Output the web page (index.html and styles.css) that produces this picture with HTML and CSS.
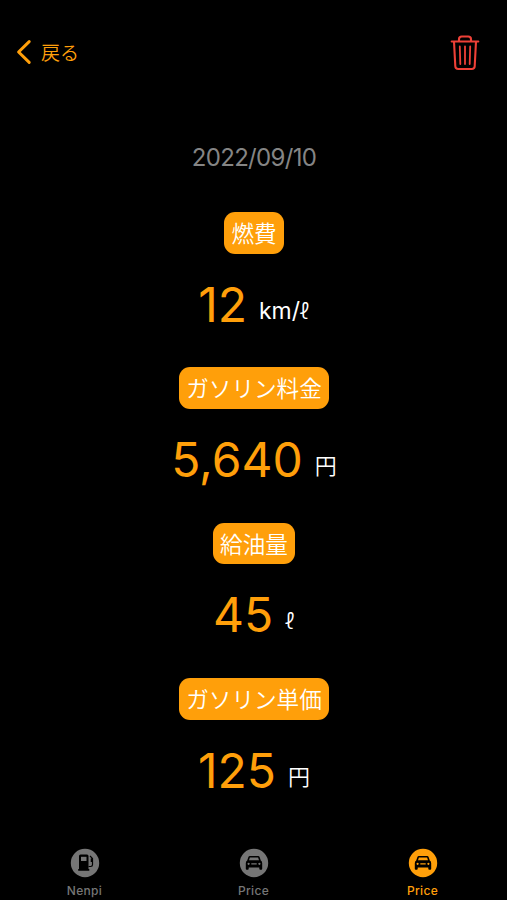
FILE: index.html
```html
<!DOCTYPE html>
<html lang="ja">
<head>
  <meta charset="UTF-8">
  <meta name="viewport" content="width=device-width, initial-scale=1.0">
  <title>燃費</title>
  <link rel="stylesheet" href="styles.css">
</head>
<body>
  <header class="nav">
    <a class="back" href="#">
      <svg width="16" height="26" viewBox="0 0 16 26"><path d="M13.2 2.6 2.6 13l10.6 10.4"/></svg>
      <span>戻る</span>
    </a>
    <button class="delete" aria-label="削除">
      <svg width="30" height="36" viewBox="0 0 30 36">
        <path d="M1.700 6.500h26.600M9 6V4.200Q9 1.500 11.800 1.500h6.400Q21 1.500 21 4.200V6M4 6.500l1.300 24.700q.2 2.800 3 2.800h13.400q2.800 0 3-2.800L26 6.500"/>
        <path class="lines" d="M9.800 11.500l.5 17.500M15 11.500v17.500M20.200 11.500l-.5 17.500"/>
      </svg>
    </button>
  </header>

  <main>
    <p class="date">2022/09/10</p>
    <section class="item">
      <h2>燃費</h2>
      <p class="value"><span class="num">12</span><span class="unit">km/<span class="liter">ℓ</span></span></p>
    </section>
    <section class="item">
      <h2>ガソリン料金</h2>
      <p class="value"><span class="num">5,640</span><span class="unit kanji">円</span></p>
    </section>
    <section class="item">
      <h2>給油量</h2>
      <p class="value"><span class="num">45</span><span class="unit liter">ℓ</span></p>
    </section>
    <section class="item">
      <h2>ガソリン単価</h2>
      <p class="value"><span class="num">125</span><span class="unit kanji">円</span></p>
    </section>
  </main>

  <nav class="tabs">
    <a class="tab" href="#">
      <svg width="30" height="30" viewBox="0 0 30 30">
        <circle cx="15" cy="15" r="14.200"/>
        <path class="cut" d="M9 8q0-1.500 1.500-1.500h6.500q1.500 0 1.500 1.500V21h.8v1.700H8.200V21H9z"/>
        <path class="window" d="M11 8.800h5.500v4.200H11z"/>
        <path class="hose" d="M18.500 18.500h2.200q1.800 0 1.800-1.700V10.500L20 8M21.300 10.500v3.500"/>
      </svg>
      <span>Nenpi</span>
    </a>
    <a class="tab" href="#">
      <svg width="30" height="30" viewBox="0 0 30 30">
        <circle cx="15" cy="15" r="14.200"/>
        <path class="cut" fill-rule="evenodd" d="M9.300 9.200Q9.700 8 10.900 8h8.200q1.200 0 1.600 1.200l1.100 3.400q1.400.8 1.400 2.600v5.600q0 .9-.9.900h-1.100q-.9 0-.9-.9v-1.300H9.700v1.300q0 .9-.9.900H7.700q-.9 0-.9-.9v-5.600q0-1.800 1.400-2.600zM10.900 9.500l-.9 2.800h10l-.9-2.800zM9.600 14.700a1.100 1.100 0 1 0 .01 0zM20.400 14.700a1.100 1.100 0 1 0 .01 0zM12.300 15.200h5.400v1.400h-5.400z"/>
      </svg>
      <span>Price</span>
    </a>
    <a class="tab active" href="#">
      <svg width="30" height="30" viewBox="0 0 30 30">
        <circle cx="15" cy="15" r="14.200"/>
        <path class="cut" fill-rule="evenodd" d="M9.300 9.200Q9.700 8 10.900 8h8.200q1.200 0 1.600 1.200l1.100 3.400q1.400.8 1.400 2.600v5.600q0 .9-.9.900h-1.100q-.9 0-.9-.9v-1.300H9.700v1.300q0 .9-.9.900H7.700q-.9 0-.9-.9v-5.600q0-1.800 1.400-2.600zM10.900 9.500l-.9 2.800h10l-.9-2.800zM9.600 14.700a1.100 1.100 0 1 0 .01 0zM20.400 14.700a1.100 1.100 0 1 0 .01 0zM12.300 15.200h5.400v1.400h-5.400z"/>
      </svg>
      <span>Price</span>
    </a>
  </nav>
</body>
</html>
```
FILE: styles.css
```css
* {
  box-sizing: border-box;
}
body {
  margin: 0;
  height: 900px;
  overflow: hidden;
  display: flex;
  flex-direction: column;
  background: #000;
  color: #fff;
  font-family: Inter, "Noto Sans CJK JP", sans-serif;
}
svg {
  display: block;
}
.nav {
  display: flex;
  justify-content: space-between;
  align-items: center;
  height: 104px;
  padding: 0 27px 0 16px;
}
.back {
  display: flex;
  align-items: center;
  gap: 9px;
  color: #ff9f0a;
  font-size: 19px;
  font-weight: 350;
  text-decoration: none;
}
.back span {
  padding-bottom: 2px;
}
.back path {
  fill: none;
  stroke: #ff9f0a;
  stroke-width: 3;
  stroke-linecap: round;
  stroke-linejoin: round;
}
.delete {
  padding: 1px 0 0;
  border: none;
  background: none;
}
.delete path {
  fill: none;
  stroke: #ee4037;
  stroke-width: 2.1;
  stroke-linecap: round;
  stroke-linejoin: round;
}
.delete .lines {
  stroke-width: 1.8;
}
main {
  flex: 1;
  padding-left: 1px;
  text-align: center;
}
.date {
  margin: 38px 0 39px;
  color: #858585;
  font-size: 24px;
  line-height: 31px;
  letter-spacing: -0.7px;
}

/* label + value */
.item {
  display: flex;
  flex-direction: column;
  align-items: center;
  height: 155.4px;
}
h2 {
  margin: 0;
  height: 41.5px;
  padding: 0 7px;
  border-radius: 11px;
  background: #ff9f0a;
  font-size: 22.6px;
  font-weight: 350;
  line-height: 43px;
}
.value {
  display: flex;
  align-items: center;
  gap: 12px;
  margin: 21px 0 0;
  height: 60px;
  line-height: 60px;
}
.num {
  color: #ff9f0a;
  font-size: 48px;
}
.unit {
  padding-top: 12px;
  font-size: 23px;
}
.kanji {
  font-size: 22px;
  font-weight: 350;
}
.liter {
  font-weight: 300;
}

/* bottom tab bar */
.tabs {
  display: grid;
  grid-template-columns: repeat(3, 1fr);
  height: 52px;
}
.tab {
  display: flex;
  flex-direction: column;
  align-items: center;
  color: #767676;
  font-size: 12px;
  font-weight: 500;
  line-height: 16px;
  letter-spacing: 0.3px;
  text-decoration: none;
}
.tab span {
  margin-top: 5px;
}
.tab circle,
.window {
  fill: currentColor;
}
.cut {
  fill: #000;
}
.hose {
  fill: none;
  stroke: #000;
  stroke-width: 1.2;
}
.active {
  color: #ff9f0a;
}
```
